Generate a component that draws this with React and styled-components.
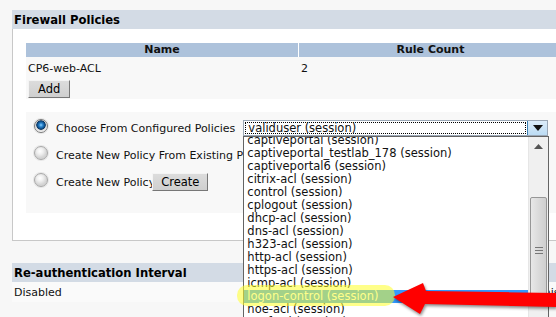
import React from "react";
import styled, { createGlobalStyle } from "styled-components";

const policies = [
  "captiveportal",
  "captiveportal_testlab_178",
  "captiveportal6",
  "citrix-acl",
  "control",
  "cplogout",
  "dhcp-acl",
  "dns-acl",
  "h323-acl",
  "http-acl",
  "https-acl",
  "icmp-acl",
  "logon-control",
  "noe-acl",
  "ospf-acl",
];

const GlobalStyle = createGlobalStyle`
  html, body {
    margin: 0;
    padding: 0;
    background: #f7f7f7;
    overflow: hidden;
  }
  body {
    font-family: "DejaVu Sans", Verdana, sans-serif;
    font-size: 11px;
    color: #111;
  }
`;

const Page = styled.div`
  position: relative;
  width: 556px;
  height: 317px;
  overflow: hidden;
  padding: 10px 0 0 12px;
  box-sizing: border-box;
`;

const SectionHeader = styled.div`
  width: 560px;
  height: 19px;
  line-height: 20px;
  padding-left: 2px;
  background: #d3dbe5;
  font-weight: bold;
  font-size: 11.6px;
  color: #000;
`;

const Panel = styled.div`
  width: 560px;
  height: 212px;
  box-sizing: border-box;
  background: #fff;
  border-left: 1px solid #c8c8c8;
  border-bottom: 1px solid #c8c8c8;
  padding: 14px 0 0 13px;
`;

const Table = styled.div`
  width: 536px;
`;

const HeadRow = styled.div`
  display: grid;
  grid-template-columns: 272px 1fr;
  column-gap: 1px;
  background: #fff;
`;

const HeadCell = styled.div`
  height: 14px;
  line-height: 14px;
  background: #adc2db;
  text-align: center;
  font-weight: bold;
`;

const BodyRow = styled.div`
  display: grid;
  grid-template-columns: 273px 1fr;
  background: #f8f8f8;
  padding: 5px 0 1px 2px;
`;

const Cell = styled.div`
  height: 16px;
  line-height: 14px;
`;

const ButtonRow = styled.div`
  background: #f8f8f8;
  padding: 1px 0 1px 2px;
`;

const Button = styled.button`
  font-family: "DejaVu Sans", Verdana, sans-serif;
  font-size: 11.5px;
  height: 18px;
  padding: 0 ${(p) => p.$pad || 10}px;
  margin: 0;
  background: linear-gradient(#dcdcdc, #cfcfcf);
  border: 1px solid;
  border-color: #f4f4f4 #777 #777 #f4f4f4;
  color: #000;
  line-height: 14px;
`;

const Options = styled.div`
  margin-top: 13px;
  width: 536px;
  height: 101px;
  background: #f8f8f8;
  padding: 6px 0 0 7px;
  box-sizing: border-box;
  display: flex;
  flex-direction: column;
  gap: 7px;
`;

const OptionRow = styled.div`
  position: relative;
  display: flex;
  align-items: center;
  height: 20px;
  white-space: nowrap;
`;

const Radio = styled.span`
  width: 14px;
  height: 14px;
  border-radius: 50%;
  box-sizing: border-box;
  border: 1px solid ${(p) => (p.$on ? "#7a7a7a" : "#a8a8a8")};
  background: ${(p) =>
    p.$on
      ? "radial-gradient(circle at 50% 42%, #8fd2ff 0, #2a86cf 1.8px, #0f4f8a 3.6px, #0b3560 4.4px, #d6d6d6 5px, #f4f4f4 6.5px)"
      : "radial-gradient(circle at 42% 35%, #ffffff 0, #f0f0f0 3px, #d4d4d4 6.5px)"};
  box-shadow: 0 0 0 1px #e6e6e6;
  margin: 0 8px 4px 1px;
  flex: none;
`;

const Label = styled.span`
  margin-right: ${(p) => p.$gap ?? 6}px;
`;

const SelectBox = styled.div`
  position: relative;
  display: flex;
  width: 305px;
  height: 16px;
  box-sizing: border-box;
  background: #fff;
  border: 1px solid #9aa7b5;
`;

const SelectValue = styled.div`
  flex: 1;
  margin: 1px;
  border: 1px dotted #000;
  line-height: 11px;
  padding-left: 2px;
  font-size: 11.5px;
`;

const SelectButton = styled.div`
  width: 19px;
  background: linear-gradient(#dcecf9, #bcdcf4);
  border-left: 1px solid #3c7fb1;
  display: flex;
  align-items: center;
  justify-content: center;
`;

const ListBox = styled.div`
  position: absolute;
  top: 15px;
  left: -1px;
  width: 306px;
  height: 200px;
  box-sizing: border-box;
  background: #fff;
  border: 1px solid #646464;
  overflow: hidden;
  display: flex;
  z-index: 5;
`;

const ListItems = styled.div`
  flex: 1;
  margin-top: -3px;
`;

const ListItem = styled.div`
  height: 13px;
  line-height: 13px;
  padding-left: 3px;
  font-size: 11.5px;
  background: ${(p) => (p.$selected ? "#3399ff" : "transparent")};
  color: ${(p) => (p.$selected ? "#fff" : "#111")};
`;

const ScrollTrack = styled.div`
  position: relative;
  width: 19px;
  background: #f0f0f0;
  border-left: 1px solid #e6e6e6;
`;

const ScrollArrow = styled.div`
  height: 18px;
  display: flex;
  align-items: center;
  justify-content: center;
`;

const ScrollThumb = styled.div`
  margin: 42px 1px 0 1px;
  height: 106px;
  box-sizing: border-box;
  border: 1px solid #979797;
  border-radius: 2px;
  background: linear-gradient(90deg, #e8e8e8, #d8d8d8 60%, #cfcfcf);
  display: flex;
  align-items: center;
  justify-content: center;
`;

const Gap = styled.div`
  height: 22px;
`;

const ValueRow = styled.div`
  display: flex;
  width: 560px;
  height: 20px;
  line-height: 22px;
  padding-left: 2px;
  background: #fafafa;
`;

const ValueCell = styled.div`
  width: ${(p) => p.$w || "auto"};
`;

const Highlight = styled.div`
  position: absolute;
  left: 237px;
  top: 285px;
  width: 158px;
  height: 21px;
  border-radius: 10px;
  background: rgba(255, 255, 40, 0.55);
  z-index: 6;
`;

const Arrow = styled.svg`
  position: absolute;
  left: 388px;
  top: 278px;
  z-index: 7;
  filter: drop-shadow(1px 2px 1.5px rgba(0, 0, 0, 0.45));
`;

const App = () => {
  return (
    <Page>
      <GlobalStyle />
      <SectionHeader>Firewall Policies</SectionHeader>
      <Panel>
        <Table>
          <HeadRow>
            <HeadCell>Name</HeadCell>
            <HeadCell>Rule Count</HeadCell>
          </HeadRow>
          <BodyRow>
            <Cell>CP6-web-ACL</Cell>
            <Cell>2</Cell>
          </BodyRow>
          <ButtonRow>
            <Button $pad={9}>Add</Button>
          </ButtonRow>
        </Table>
        <Options>
          <OptionRow>
            <Radio $on />
            <Label $gap={8}>Choose From Configured Policies</Label>
            <SelectBox>
              <SelectValue>validuser (session)</SelectValue>
              <SelectButton>
                <svg width="10" height="6" viewBox="0 0 10 6">
                  <path d="M0 0h10L5 6z" fill="#111" />
                </svg>
              </SelectButton>
              <ListBox>
                <ListItems>
                  {policies.map((name) => (
                    <ListItem key={name} $selected={name === "logon-control"}>
                      {name} (session)
                    </ListItem>
                  ))}
                </ListItems>
                <ScrollTrack>
                  <ScrollArrow>
                    <svg width="9" height="5" viewBox="0 0 9 5">
                      <path d="M0 5L4.5 0L9 5z" fill="#555" />
                    </svg>
                  </ScrollArrow>
                  <ScrollThumb>
                    <svg width="8" height="7" viewBox="0 0 8 7">
                      <path d="M0 .5h8M0 3.5h8M0 6.5h8" stroke="#777" />
                    </svg>
                  </ScrollThumb>
                </ScrollTrack>
              </ListBox>
            </SelectBox>
          </OptionRow>
          <OptionRow>
            <Radio />
            <Label>Create New Policy From Existing Policy</Label>
          </OptionRow>
          <OptionRow>
            <Radio />
            <Label $gap={-3}>Create New Policy</Label>
            <Button $pad={8}>Create</Button>
          </OptionRow>
        </Options>
      </Panel>
      <Gap />
      <SectionHeader>Re-authentication Interval</SectionHeader>
      <ValueRow>
        <ValueCell $w="523px">Disabled</ValueCell>
        <ValueCell>This</ValueCell>
      </ValueRow>
      <Highlight />
      <Arrow width="168" height="40" viewBox="0 0 168 40">
        <polygon
          points="5,19 35,5 38,13 168,15 168,29 37,26 32,36"
          fill="#ff0000"
        />
      </Arrow>
    </Page>
  );
};

export default App;
